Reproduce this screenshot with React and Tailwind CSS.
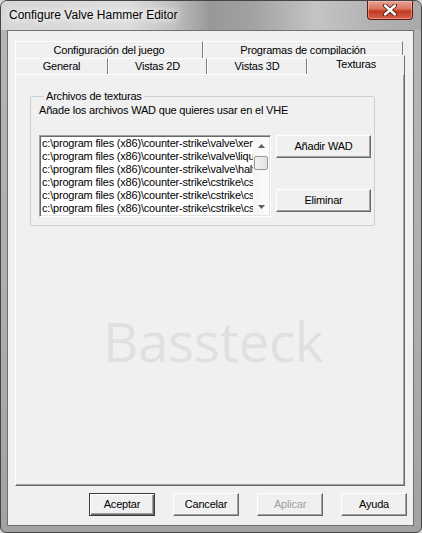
import React from 'react'

const files = [
  'c:\\program files (x86)\\counter-strike\\valve\\xeno.wad',
  'c:\\program files (x86)\\counter-strike\\valve\\liquids.wad',
  'c:\\program files (x86)\\counter-strike\\valve\\halflife.wad',
  'c:\\program files (x86)\\counter-strike\\cstrike\\cs_dust.wad',
  'c:\\program files (x86)\\counter-strike\\cstrike\\cs_assault.wad',
  'c:\\program files (x86)\\counter-strike\\cstrike\\cstrike.wad',
]

function CloseButton() {
  return (
    <div className="mr-[8px] flex h-[19px] w-[46px] items-center justify-center rounded-b-[4px] border border-t-0 border-[#5c1a12] bg-[linear-gradient(180deg,#e8a393_0%,#d9735d_45%,#c2391f_55%,#d8604a_100%)] shadow-[inset_0_0_0_1px_rgba(255,210,200,0.45)]">
      <svg width="16" height="12" viewBox="0 0 16 12">
        <path d="M3 1.5 L13 10.5 M13 1.5 L3 10.5" stroke="#4a1a14" strokeWidth="4.2" strokeLinecap="round" />
        <path d="M3 1.5 L13 10.5 M13 1.5 L3 10.5" stroke="#ffffff" strokeWidth="2.4" strokeLinecap="round" />
      </svg>
    </div>
  )
}

function Tab({ w, children, selected }) {
  if (selected) {
    return (
      <div
        style={{ width: w }}
        className="relative z-10 flex h-[20px] translate-y-[1px] items-start justify-center border-l border-t border-r border-l-white border-t-white border-r-[#6e6e6e] bg-[#f0f0f0] pt-[2px] leading-[13px]"
      >
        {children}
      </div>
    )
  }
  return (
    <div
      style={{ width: w }}
      className="flex h-full items-center justify-center border-l border-t border-r border-l-white border-t-white border-r-[#7c7c7c] bg-[#f0f0f0] leading-[13px]"
    >
      {children}
    </div>
  )
}

function Button({ w, h = 23, children, isDefault, disabled }) {
  return (
    <div
      style={{ width: w, height: h }}
      className={
        'flex items-center justify-center bg-[#f0f0f0] ' +
        (isDefault
          ? 'border border-[#3a3a3a] shadow-[inset_1px_1px_0_#ffffff,inset_-1px_-1px_0_#696969,inset_-2px_-2px_0_#a0a0a0]'
          : 'border border-t-[#ffffff] border-l-[#ffffff] border-r-[#696969] border-b-[#696969] shadow-[inset_-1px_-1px_0_#a0a0a0]') +
        (disabled ? ' text-[#a0a0a0]' : '')
      }
    >
      {children}
    </div>
  )
}

function ListBox() {
  return (
    <div className="flex h-[82px] w-[232px] border border-t-[#a0a0a0] border-l-[#a0a0a0] border-r-white border-b-white shadow-[inset_1px_1px_0_#696969,inset_-1px_-1px_0_#e3e3e3] bg-white p-[1px]">
      <div className="min-w-0 flex-1 overflow-hidden pl-[1px]">
        {files.map((f) => (
          <div key={f} className="h-[13px] overflow-hidden whitespace-nowrap leading-[13px]">
            {f}
          </div>
        ))}
      </div>
      <div className="flex w-[16px] flex-col bg-[linear-gradient(90deg,#f4f4f4,#fcfcfc)]">
        <div className="flex h-[17px] items-center justify-center">
          <svg width="7" height="4" viewBox="0 0 7 4">
            <path d="M0 4 L3.5 0 L7 4 Z" fill="#606060" />
          </svg>
        </div>
        <div className="mx-[1px] mt-[2px] h-[14px] rounded-[2px] border border-[#9a9a9a] bg-[linear-gradient(90deg,#f2f2f2,#e2e2e2)]" />
        <div className="flex-1" />
        <div className="flex h-[17px] items-center justify-center">
          <svg width="7" height="4" viewBox="0 0 7 4">
            <path d="M0 0 L3.5 4 L7 0 Z" fill="#606060" />
          </svg>
        </div>
      </div>
    </div>
  )
}

export default function App() {
  return (
    <div className="h-[533px] w-[422px] bg-[#d8d8d8] font-['Liberation_Sans',Arial,sans-serif] text-[11px] tracking-[-0.2px] text-black">
      <div className="flex h-full flex-col overflow-hidden rounded-t-[7px] rounded-b-[6px] border border-[#454545] bg-[linear-gradient(180deg,#b6b6b6_0%,#adadad_60%,#a2a2a2_100%)]">
        {/* title bar */}
        <div className="flex h-[29px] shrink-0 items-start justify-between bg-[linear-gradient(90deg,#d6d6d6_0%,#dcdcdc_30%,#c4c4c4_40%,#989898_50%,#a2a2a2_60%,#c4c4c4_75%,#b4b4b4_87%,#a9a9a9_100%)]">
          <span className="pl-[8px] text-[12px] leading-[29px] tracking-normal text-black [text-shadow:0_0_6px_#ffffff,0_0_10px_#ffffff,0_0_14px_#ffffff]">
            Configure Valve Hammer Editor
          </span>
          <CloseButton />
        </div>

        {/* client area */}
        <div className="ml-[6px] flex h-[496px] w-[407px] flex-col border border-[#707070] bg-[#f0f0f0] pl-[7px] pt-[10px]">
          {/* tab rows */}
          <div className="flex h-[17px] w-[388px]">
            <Tab w={188}>Configuración del juego</Tab>
            <Tab w={200}>Programas de compilación</Tab>
          </div>
          <div className="flex h-[16px] items-end">
            <Tab w={93}>General</Tab>
            <Tab w={99}>Vistas 2D</Tab>
            <Tab w={100}>Vistas 3D</Tab>
            <Tab w={98} selected>Texturas</Tab>
          </div>

          {/* tab page */}
          <div className="flex h-[412px] w-[390px] flex-col border border-t-white border-l-white border-r-[#696969] border-b-[#696969] shadow-[inset_-1px_-1px_0_#a0a0a0] pl-[14px] pt-[15px]">
            <fieldset className="w-[345px] rounded-[2px] border border-[#cfcfcf] pb-[8px] pl-[8px]">
              <legend className="ml-[5px] px-[2px] leading-[13px]">Archivos de texturas</legend>
              <div className="mt-[1px] leading-[13px]">Añade los archivos WAD que quieres usar en el VHE</div>
              <div className="mt-[18px] flex gap-[5px]">
                <ListBox />
                <div className="flex flex-col gap-[31px]">
                  <Button w={95}>Añadir WAD</Button>
                  <Button w={95}>Eliminar</Button>
                </div>
              </div>
            </fieldset>

            <div className="mt-[87px] w-[362px] pl-[4px] text-center font-['Open_Sans',sans-serif] text-[55px] leading-[56px] tracking-[-0.5px] text-[#e0e0e0]">
              Bassteck
            </div>
          </div>

          {/* dialog buttons */}
          <div className="mt-[7px] flex gap-[18px] pl-[74px]">
            <Button w={66} isDefault>Aceptar</Button>
            <Button w={66}>Cancelar</Button>
            <Button w={66} disabled>Aplicar</Button>
            <Button w={66}>Ayuda</Button>
          </div>
        </div>
      </div>
    </div>
  )
}
